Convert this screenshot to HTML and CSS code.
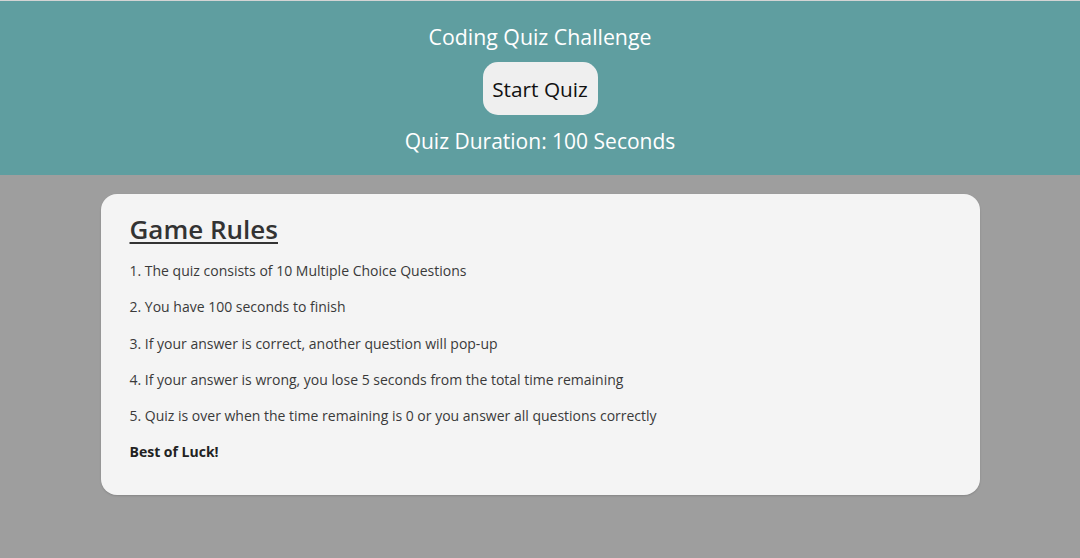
FILE: index.html
```html
<!DOCTYPE html>
<html lang="en">
<head>
<meta charset="utf-8">
<title>Coding Quiz Challenge</title>
<link rel="stylesheet" href="styles.css">
</head>
<body>
<header class="header">
  <h1 class="title">Coding Quiz Challenge</h1>
  <button class="start-btn">Start Quiz</button>
  <p class="duration">Quiz Duration: 100 Seconds</p>
</header>
<main class="card">
  <h2 class="rules-title">Game Rules</h2>
  <p class="rule">1. The quiz consists of 10 Multiple Choice Questions</p>
  <p class="rule">2. You have 100 seconds to finish</p>
  <p class="rule">3. If your answer is correct, another question will pop-up</p>
  <p class="rule">4. If your answer is wrong, you lose 5 seconds from the total time remaining</p>
  <p class="rule">5. Quiz is over when the time remaining is 0 or you answer all questions correctly</p>
  <p class="rule luck">Best of Luck!</p>
</main>
</body>
</html>
```
FILE: styles.css
```css
* { box-sizing: border-box; }
html, body { margin: 0; padding: 0; }
body {
  background: #9e9e9e;
  font-family: "Open Sans", "Noto Sans", sans-serif;
  height: 558px;
  overflow: hidden;
}
.header {
  border-top: 1px solid #d4d4d4;
  background: #5f9ea0;
  height: 175px;
  display: flex;
  flex-direction: column;
  align-items: center;
  color: #fff;
  padding-top: 21px;
}
.title {
  margin: 0;
  font-size: 21.3px;
  font-weight: 400;
  line-height: 30px;
}
.start-btn {
  margin-top: 10px;
  width: 115px;
  height: 53px;
  border: none;
  border-radius: 15px;
  background: #efefef;
  color: #111;
  font-family: inherit;
  font-size: 20.8px;
  padding: 0;
}
.duration {
  margin: 11px 0 0;
  font-size: 21px;
  line-height: 30px;
}
.card {
  width: 879px;
  margin: 19px auto 0;
  background: #f4f4f4;
  border-radius: 16px;
  box-shadow: 0 1px 2px rgba(0,0,0,0.15);
  padding: 16px 29px 24px;
  color: #333;
}
.rules-title {
  margin: 0 0 5px;
  font-size: 26px;
  font-weight: 600;
  text-decoration: underline;
  text-decoration-thickness: 2px;
  text-underline-offset: 3px;
  line-height: 38px;
}
.rule {
  margin: 0;
  font-size: 14px;
  line-height: 36.3px;
  color: #3a3a3a;
}
.luck { font-weight: 700; color: #222; }
```
